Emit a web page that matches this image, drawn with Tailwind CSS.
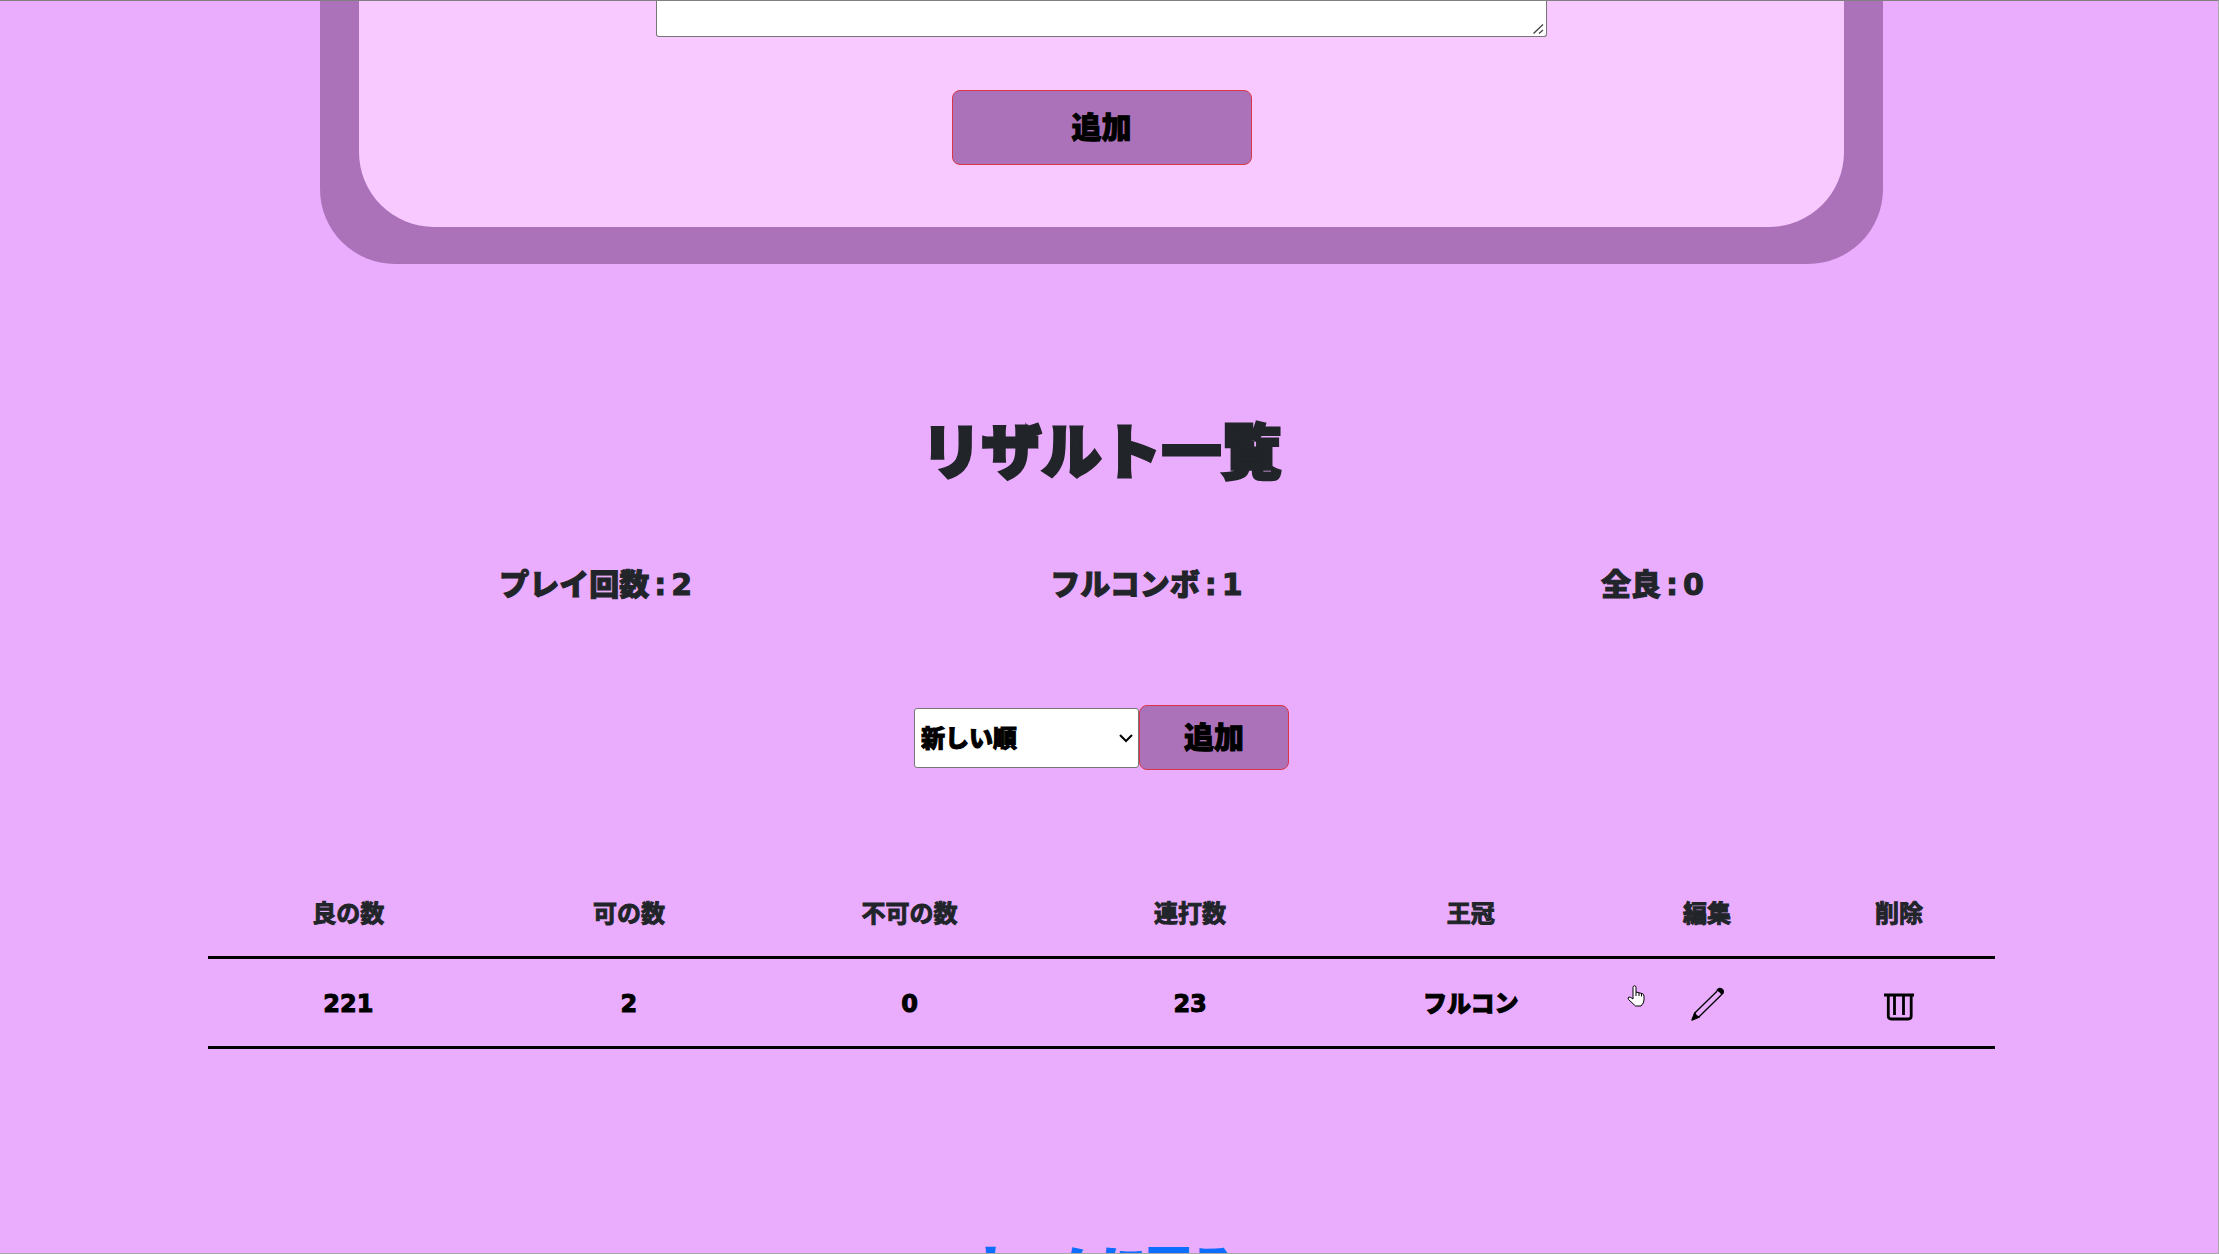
<!DOCTYPE html>
<html lang="ja">
<head>
<meta charset="utf-8">
<meta name="viewport" content="width=device-width, initial-scale=1">
<title>リザルト一覧</title>
<script src="https://cdn.jsdelivr.net/npm/@tailwindcss/browser@4"></script>
</head>
<body class="h-screen overflow-hidden border-t border-r border-b border-t-[#808080] border-r-[#a9a9a9] border-b-[#a9a9a9] bg-[#eaadfd] pr-[15px] font-['DejaVu_Sans','Noto_Sans_CJK_JP',sans-serif] font-black text-[#212529] [-webkit-text-stroke:1px_currentColor]">
  <section class="px-80">
    <form class="rounded-b-[75px] bg-[#ab72ba] px-[39px] pb-[37px]">
      <div class="flex flex-col items-center rounded-b-[75px] bg-[#f7c9ff] pb-[62px]">
        <div class="relative w-3/5">
          <textarea aria-label="メモ" class="block h-9 w-full resize-none rounded-b-[3px] border border-t-0 border-[#767676] bg-white"></textarea>
          <svg class="pointer-events-none absolute right-[3px] bottom-[3px]" width="11" height="10" viewBox="0 0 11 10" fill="none" stroke="#444" stroke-width="1.3" aria-hidden="true"><path d="M.5 9.500L10 .5M6 9.500L10 6"/></svg>
        </div>
        <button type="submit" class="mt-[53px] h-[75px] w-[300px] rounded-lg border border-[#dc3545] bg-[#ab72ba] text-[30px] text-black">追加</button>
      </div>
    </form>
  </section>

  <main>
    <h1 class="mt-[153px] text-center text-[60px] leading-[72px] [-webkit-text-stroke:3px_currentColor]">リザルト一覧</h1>
    <div class="mt-[73px] flex justify-around px-80 text-[30px] leading-[45px]">
      <p>プレイ回数<span class="mx-[5px]">:</span>2</p>
      <p>フルコンボ<span class="mx-[5px]">:</span>1</p>
      <p>全良<span class="mx-[5px]">:</span>0</p>
    </div>
    <form class="mt-[98px] flex items-center justify-center text-black">
      <div class="relative">
        <select aria-label="並び順" class="block h-[60px] w-[225px] appearance-none rounded-[3px] border border-[#767676] bg-white px-[6px] pt-0.5 text-2xl">
          <option>新しい順</option>
        </select>
        <svg class="pointer-events-none absolute top-[26px] right-[6px]" width="14" height="9" viewBox="0 0 14 9" fill="none" stroke="#000" stroke-width="2" aria-hidden="true"><path d="M1 1l6 6 6-6"/></svg>
      </div>
      <button type="submit" class="h-[65px] w-[150px] rounded-lg border border-[#dc3545] bg-[#ab72ba] text-[30px]">追加</button>
    </form>

    <div class="mt-[99px] px-52">
      <table class="w-full table-fixed text-center text-2xl">
        <colgroup>
          <col><col><col><col><col>
          <col class="w-48"><col class="w-48">
        </colgroup>
        <thead>
          <tr class="h-[88px] border-b-3 border-black">
            <th class="pt-1">良の数</th><th class="pt-1">可の数</th><th class="pt-1">不可の数</th><th class="pt-1">連打数</th><th class="pt-1">王冠</th><th class="pt-1">編集</th><th class="pt-1">削除</th>
          </tr>
        </thead>
        <tbody class="text-black">
          <tr class="h-[90px] border-b-3 border-black">
            <td class="pt-1">221</td><td class="pt-1">2</td><td class="pt-1">0</td><td class="pt-1">23</td><td class="pt-1">フルコン</td>
            <td class="pt-1">
              <button type="button" aria-label="編集" class="relative block w-full pl-0.5">
                <svg class="mx-auto" width="34" height="34" viewBox="0 0 36 36" fill="none" stroke="#000" stroke-width="1.4" stroke-linejoin="round" aria-hidden="true">
                  <path d="M27.500 4.500L4 27.500L1.800 34L8 32L32 8.500"/>
                  <path d="M1 35L4 27.500Q5 31 8.500 32Z" fill="#000"/>
                  <path d="M27.500 3.500Q30 0 33 2.500Q36 5 32.500 8Q31 4 27.500 3.500Z" fill="#000"/>
                </svg>
                <svg class="absolute -top-0.5 left-4" width="18" height="22" viewBox="0 0 18 22" fill="#fff" stroke="#000" stroke-width="1" stroke-linejoin="round" aria-hidden="true">
                  <path d="M6 14V2.500Q6 .8 7.500 .8T9 2.500V7L15 8.500Q17 9 17 11V15Q17 18 14 21H8.500L1.500 14.500Q.3 12.500 2 12Q3.500 11.800 6 14Z"/>
                  <path d="M9 7V11M12 8V11M14.500 8.500V11.500"/>
                </svg>
              </button>
            </td>
            <td class="pt-2">
              <button type="button" aria-label="削除" class="block w-full">
                <svg class="mx-auto" width="30" height="30" viewBox="0 0 30 30" fill="none" stroke="#000" stroke-width="2.800" aria-hidden="true">
                  <path d="M0 4H30M4.300 4V25Q4.300 28 7.300 28H24.200Q27.200 28 27.200 25V4M10.500 4V24M19.500 4V24"/>
                </svg>
              </button>
            </td>
          </tr>
        </tbody>
      </table>
    </div>

    <p class="mt-[187px] text-center text-[45px] leading-[68px] text-[#0d6efd] [-webkit-text-stroke:2px_currentColor]"><a href="#">ホームに戻る</a></p>
  </main>
</body>
</html>
